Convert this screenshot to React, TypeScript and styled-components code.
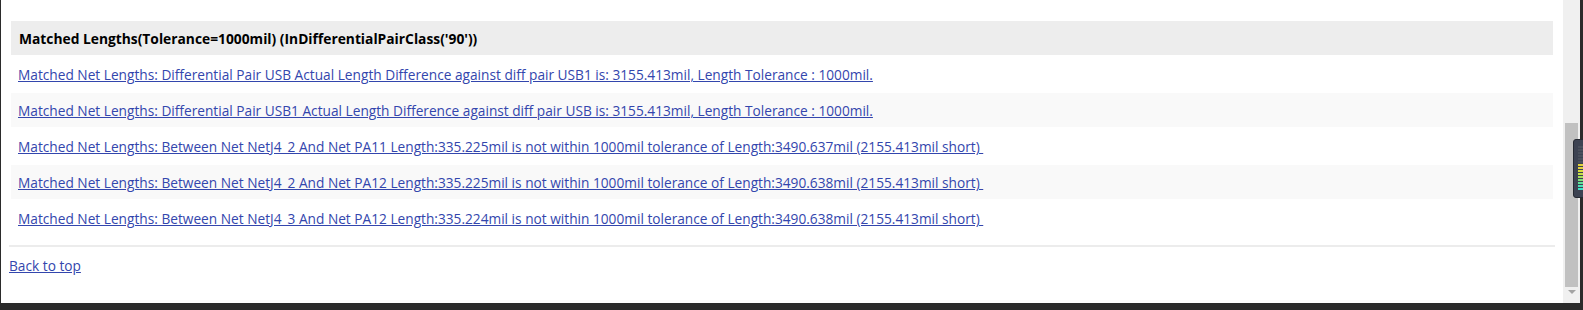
import styled, { createGlobalStyle } from "styled-components";

const GlobalStyle = createGlobalStyle`
  html, body {
    margin: 0;
    padding: 0;
    background: #2b2b2b;
  }
`;

const rows = [
  "Matched Net Lengths: Differential Pair USB Actual Length Difference against diff pair USB1 is: 3155.413mil, Length Tolerance : 1000mil.",
  "Matched Net Lengths: Differential Pair USB1 Actual Length Difference against diff pair USB is: 3155.413mil, Length Tolerance : 1000mil.",
  "Matched Net Lengths: Between Net NetJ4_2 And Net PA11 Length:335.225mil is not within 1000mil tolerance of Length:3490.637mil (2155.413mil short) ",
  "Matched Net Lengths: Between Net NetJ4_2 And Net PA12 Length:335.225mil is not within 1000mil tolerance of Length:3490.638mil (2155.413mil short) ",
  "Matched Net Lengths: Between Net NetJ4_3 And Net PA12 Length:335.224mil is not within 1000mil tolerance of Length:3490.638mil (2155.413mil short) ",
];

const meterColors = [
  "#4a505c", "#4a505c", "#4a505c", "#4a505c", "#4a505c", "#4a505c",
  "#e4d23a", "#e4d23a", "#d8dc3c", "#c6e04a", "#a8e05a",
  "#7ee07a", "#5ee29a", "#4ae2b6", "#3ee2c8",
];

function App() {
  return (
    <Frame>
      <GlobalStyle />
      <Window>
        <Page>
          <Table>
            <tbody>
              <tr>
                <HeadCell>
                  Matched Lengths(Tolerance=1000mil) (InDifferentialPairClass('90'))
                </HeadCell>
              </tr>
              {rows.map((r, i) => (
                <tr key={i}>
                  <Cell $alt={i % 2 === 1}>
                    <a href="#">{r}</a>
                  </Cell>
                </tr>
              ))}
            </tbody>
          </Table>
          <Rule />
          <TopLink href="#">Back to top</TopLink>
        </Page>
        <ScrollBar>
          <Track>
            <Thumb />
          </Track>
          <Arrow />
        </ScrollBar>
      </Window>
      <Meter>
        {meterColors.map((c, i) => (
          <Led key={i} style={{ background: c }} />
        ))}
      </Meter>
    </Frame>
  );
}
export default App;

const Frame = styled.div`
  position: relative;
  width: 1583px;
  height: 310px;
  background: #2b2b2b;
  overflow: hidden;
`;

const Window = styled.div`
  display: flex;
  margin-left: 1px;
  width: 1579px;
  height: 303px;
  background: #fff;
`;

const Page = styled.div`
  flex: 1;
  padding: 19px 8px 0 8px;
  font-family: "Open Sans", "Noto Sans", sans-serif;
  font-size: 13.7px;
  color: #000;
`;

const Table = styled.table`
  width: 100%;
  border-spacing: 2px;
  border-collapse: separate;
`;

const HeadCell = styled.td`
  height: 34px;
  padding: 0 0 0 8px;
  background: #ededed;
  font-weight: 700;
  font-size: 13.8px;
  box-sizing: border-box;
`;

const Cell = styled.td<{ $alt: boolean }>`
  height: 34px;
  padding: 0 0 0 7px;
  background: ${(p) => (p.$alt ? "#f9f9f9" : "#fff")};
  box-sizing: border-box;
  white-space: pre;

  a {
    color: #3346ad;
    text-decoration: underline;
  }
`;

const Rule = styled.div`
  margin-top: 8px;
  height: 2px;
  background: #ececec;
`;

const TopLink = styled.a`
  display: inline-block;
  margin-top: 9px;
  color: #3346ad;
  text-decoration: underline;
`;

const ScrollBar = styled.div`
  display: flex;
  flex-direction: column;
  width: 17px;
  background: #f0f0f0;
`;

const Track = styled.div`
  flex: 1;
  position: relative;
  padding: 123px 2px 0 2px;
  box-sizing: border-box;
`;

const Thumb = styled.div`
  height: 164px;
  background: #c1c1c1;
`;

const Arrow = styled.div`
  align-self: center;
  margin: 0 0 9px 0;
  width: 0;
  height: 0;
  border-left: 4px solid transparent;
  border-right: 4px solid transparent;
  border-top: 4px solid #a3a3a3;
`;

const Meter = styled.div`
  position: absolute;
  left: 1573px;
  top: 139px;
  width: 14px;
  height: 59px;
  border-radius: 3px;
  background: #3d4352;
  border: 1px solid #262a33;
  box-sizing: border-box;
  display: flex;
  flex-direction: column;
  gap: 1px;
  padding: 6px 0 0 4px;
`;

const Led = styled.div`
  width: 6px;
  height: 2px;
`;
